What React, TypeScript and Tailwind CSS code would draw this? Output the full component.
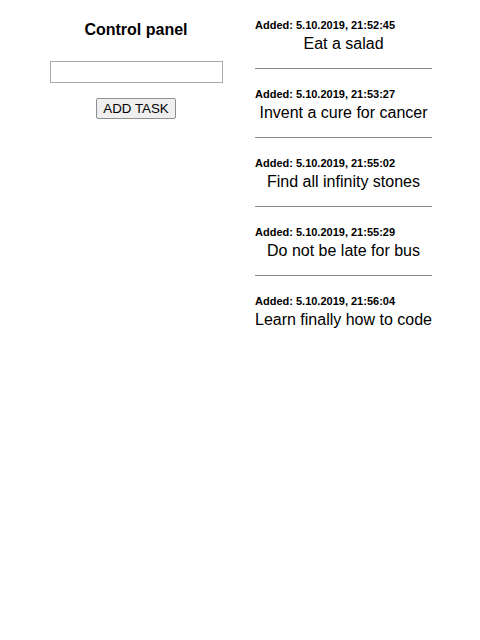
import { useState } from 'react';

type Task = { added: string; text: string };

const initialTasks: Task[] = [
  { added: '5.10.2019, 21:52:45', text: 'Eat a salad' },
  { added: '5.10.2019, 21:53:27', text: 'Invent a cure for cancer' },
  { added: '5.10.2019, 21:55:02', text: 'Find all infinity stones' },
  { added: '5.10.2019, 21:55:29', text: 'Do not be late for bus' },
  { added: '5.10.2019, 21:56:04', text: 'Learn finally how to code' },
];

export default function App() {
  const [tasks] = useState<Task[]>(initialTasks);
  const [value, setValue] = useState('');

  return (
    <div className="flex items-start bg-white text-black font-['Liberation_Sans',Arial,sans-serif]">
      {/* control panel */}
      <div className="w-[255px] pl-[17px] flex flex-col items-center">
        <h3 className="mt-[20px] text-[16px] leading-[20px] font-bold">Control panel</h3>
        <input
          type="text"
          value={value}
          onChange={e => setValue(e.target.value)}
          className="mt-[21px] w-[173px] h-[22px] border border-[#a9a9a9] bg-white px-[2px] text-[13px] outline-none"
        />
        <button
          type="button"
          className="mt-[15px] h-[21px] px-[6px] border border-[#8f8f8f] rounded-[2px] bg-[#efefef] text-[13.33px] leading-[19px] text-black"
        >
          ADD TASK
        </button>
      </div>

      {/* task list */}
      <div className="pt-[19px] flex flex-col">
        {tasks.map((task, i) => (
          <div key={i} className="flex flex-col">
            <span className="text-[11px] leading-[13px] font-bold">Added: {task.added}</span>
            <span className="mt-[2px] text-center text-[16px] leading-[20px]">{task.text}</span>
            {i < tasks.length - 1 && <hr className="mt-[14px] mb-[19px] border-t border-[#888]" />}
          </div>
        ))}
      </div>
    </div>
  );
}
